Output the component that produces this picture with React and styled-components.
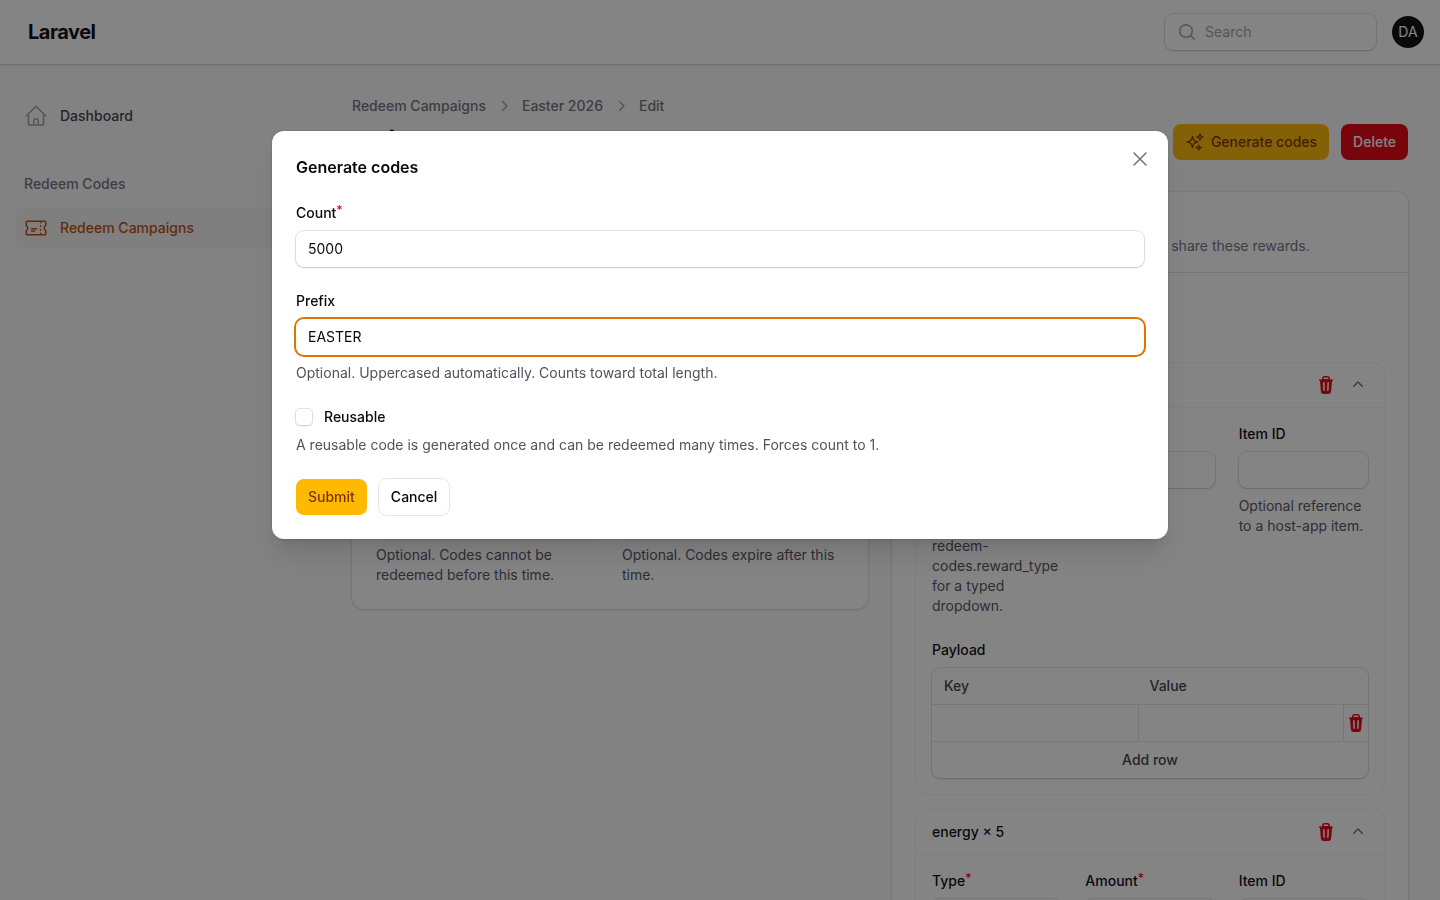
import React from 'react';
import styled, { createGlobalStyle, css } from 'styled-components';
import {
  HiOutlineHome,
  HiOutlineTicket,
  HiOutlineSparkles,
  HiOutlineXMark,
  HiMiniMagnifyingGlass,
  HiMiniChevronRight,
  HiMiniChevronUp,
  HiMiniTrash,
} from 'react-icons/hi2';

const GlobalStyle = createGlobalStyle`
  *, *::before, *::after {
    box-sizing: border-box;
  }

  body {
    margin: 0;
    overflow: hidden;
    background: #fafafa;
    color: #09090b;
    font-family: Inter, "Liberation Sans", sans-serif;
    font-size: 14px;
    line-height: 20px;
    -webkit-font-smoothing: antialiased;
  }

  button, input {
    font: inherit;
    color: inherit;
  }

  h1, h2, h3, p {
    margin: 0;
  }
`;

const ring = '0 0 0 1px rgba(9, 9, 11, 0.1)';
const softRing = '0 0 0 1px rgba(9, 9, 11, 0.05)';
const shadow = '0 1px 3px rgba(0, 0, 0, 0.1), 0 1px 2px -1px rgba(0, 0, 0, 0.1)';

const Shell = styled.div`
  height: 100vh;
  overflow: hidden;
`;

const Topbar = styled.header`
  display: flex;
  align-items: center;
  justify-content: space-between;
  height: 64px;
  padding: 0 16px 0 28px;
  background: #fff;
  box-shadow: ${softRing}, ${shadow};
`;

const Logo = styled.a`
  font-size: 20px;
  font-weight: 700;
  letter-spacing: -0.025em;
  color: #09090b;
  text-decoration: none;
`;

const TopbarEnd = styled.div`
  display: flex;
  align-items: center;
  gap: 16px;
`;

const SearchBox = styled.label`
  display: flex;
  align-items: center;
  gap: 8px;
  width: 211px;
  height: 36px;
  padding: 0 12px;
  border-radius: 8px;
  background: #fff;
  box-shadow: ${ring}, ${shadow};
  color: #9f9fa9;
`;

const SearchInput = styled.input`
  flex: 1;
  min-width: 0;
  padding: 0;
  border: none;
  outline: none;
  background: none;

  &::placeholder {
    color: #9f9fa9;
    opacity: 1;
  }
`;

const Avatar = styled.button`
  width: 32px;
  height: 32px;
  padding: 0;
  border: none;
  border-radius: 50%;
  background: #09090b;
  color: #fff;
`;

const Layout = styled.div`
  display: flex;
`;

const Sidebar = styled.nav`
  display: flex;
  flex-direction: column;
  gap: 28px;
  flex: 0 0 320px;
  padding: 32px 16px;
`;

const NavGroup = styled.div`
  display: flex;
  flex-direction: column;
  gap: 4px;
`;

const NavLabel = styled.span`
  padding: 8px;
  font-weight: 500;
  line-height: 24px;
  color: #71717b;
`;

const NavItem = styled.a`
  display: flex;
  align-items: center;
  gap: 12px;
  height: 40px;
  padding: 0 8px;
  border-radius: 8px;
  background: ${props => props.$active ? '#f4f4f5' : 'transparent'};
  color: ${props => props.$active ? '#bb4d00' : '#3f3f46'};
  font-weight: 500;
  text-decoration: none;

  svg {
    color: ${props => props.$active ? '#bb4d00' : '#9f9fa9'};
  }
`;

const Main = styled.main`
  flex: 1;
  min-width: 0;
  padding: 32px;
`;

const PageHeader = styled.div`
  display: flex;
  align-items: flex-start;
  justify-content: space-between;
  margin-bottom: 32px;
`;

const Breadcrumbs = styled.div`
  display: flex;
  align-items: center;
  gap: 8px;
  margin-bottom: 8px;
  color: #9f9fa9;
`;

const Crumb = styled.a`
  color: #71717b;
  font-weight: 500;
  text-decoration: none;
`;

const Title = styled.h1`
  font-size: 30px;
  font-weight: 700;
  line-height: 36px;
  letter-spacing: -0.025em;
`;

const Actions = styled.div`
  display: flex;
  gap: 12px;
  margin-top: ${props => props.$offset ? '28px' : '0'};
`;

const buttonColors = {
  primary: css`
    background: #ffb900;
    color: #7b3306;
  `,
  danger: css`
    background: #e7000b;
    color: #fff;
  `,
  gray: css`
    background: #fff;
    color: #09090b;
    box-shadow: ${ring};
  `,
};

const Button = styled.button`
  display: inline-flex;
  align-items: center;
  gap: 6px;
  height: 36px;
  padding: 0 12px;
  border: none;
  border-radius: 8px;
  font-weight: 500;
  cursor: pointer;
  ${props => buttonColors[props.$color]}
`;

const IconButton = styled.button`
  display: inline-flex;
  padding: 0;
  border: none;
  background: none;
  color: ${props => props.$danger ? '#e7000b' : '#71717b'};
  cursor: pointer;
`;

const Columns = styled.div`
  display: grid;
  grid-template-columns: repeat(${props => props.$count}, minmax(0, 1fr));
  align-items: start;
  gap: 24px;
`;

const Section = styled.section`
  border-radius: 12px;
  background: #fff;
  box-shadow: ${softRing}, ${shadow};
`;

const SectionHeader = styled.div`
  display: flex;
  flex-direction: column;
  gap: 4px;
  padding: 16px 24px;
  border-bottom: 1px solid #e4e4e7;
`;

const SectionHeading = styled.h2`
  font-size: 16px;
  font-weight: 600;
  line-height: 24px;
`;

const SectionText = styled.p`
  color: #71717b;
  white-space: nowrap;
`;

const SectionBody = styled.div`
  display: flex;
  flex-direction: column;
  gap: 24px;
  padding: 24px;
`;

const Field = styled.div`
  display: flex;
  flex-direction: column;
  gap: 8px;
`;

const Label = styled.label`
  font-weight: 500;
`;

const Required = styled.sup`
  position: relative;
  top: -4px;
  vertical-align: baseline;
  font-size: 12px;
  line-height: 0;
  color: #e7000b;
`;

const TextInput = styled.input`
  width: 100%;
  height: 36px;
  padding: 0 12px 2px;
  border: none;
  border-radius: 8px;
  outline: none;
  background: #fff;
  box-shadow: ${ring}, ${shadow};

  &:focus {
    box-shadow: 0 0 0 2px #e17100;
  }
`;

const HelpText = styled.p`
  color: #52525c;
`;

const Repeater = styled.div`
  display: flex;
  flex-direction: column;
  gap: 16px;
`;

const RepeaterTop = styled.div`
  display: flex;
  flex-direction: column;
  gap: 8px;
`;

const TextLink = styled.button`
  align-self: flex-start;
  padding: 0;
  border: none;
  background: none;
  font-weight: 500;
  line-height: 22px;
`;

const Item = styled.div`
  border-radius: 12px;
  background: #fff;
  box-shadow: ${softRing};
`;

const ItemHeader = styled.div`
  display: flex;
  align-items: center;
  gap: 12px;
  height: 44px;
  padding: 0 16px;
`;

const ItemTitle = styled.h3`
  flex: 1;
  font-size: 14px;
  font-weight: 500;
`;

const ItemBody = styled.div`
  display: flex;
  flex-direction: column;
  gap: 24px;
  padding: 16px;
  border-top: 1px solid #f4f4f5;
`;

const KeyValue = styled.div`
  border-radius: 8px;
  background: #fff;
  box-shadow: ${ring}, ${shadow};
`;

const Table = styled.table`
  width: 100%;
  table-layout: fixed;
  border-spacing: 0;

  th {
    height: 36px;
    padding: 0 12px;
    text-align: left;
    font-weight: 500;
    color: #3f3f46;
  }

  th:last-child {
    width: 25px;
    padding: 0;
  }

  td {
    height: 38px;
    padding: 0;
    border-top: 1px solid #e4e4e7;
    border-bottom: 1px solid #e4e4e7;
  }

  td + td {
    border-left: 1px solid #e4e4e7;
  }
`;

const CellInput = styled.input`
  display: block;
  width: 100%;
  height: 36px;
  padding: 0 12px;
  border: none;
  outline: none;
  background: none;
`;

const DeleteCell = styled.div`
  display: flex;
  justify-content: center;
`;

const AddRow = styled.button`
  display: block;
  width: 100%;
  height: 36px;
  padding: 0;
  border: none;
  background: none;
  color: #3f3f46;
  font-weight: 500;
`;

const Overlay = styled.div`
  position: fixed;
  inset: 0;
  display: grid;
  grid-template-rows: 1fr auto 3fr;
  justify-items: center;
  padding: 16px;
  background: rgba(9, 9, 11, 0.5);
`;

const Modal = styled.form`
  position: relative;
  grid-row: 2;
  display: flex;
  flex-direction: column;
  gap: 24px;
  width: 100%;
  max-width: 896px;
  padding: 24px;
  border-radius: 12px;
  background: #fff;
  box-shadow: ${softRing}, 0 20px 25px -5px rgba(0, 0, 0, 0.1), 0 8px 10px -6px rgba(0, 0, 0, 0.1);
`;

const CloseButton = styled(IconButton)`
  position: absolute;
  top: 16px;
  right: 16px;
`;

const CheckLabel = styled(Label)`
  display: flex;
  align-items: center;
  gap: 12px;
`;

const Checkbox = styled.input`
  appearance: none;
  width: 16px;
  height: 16px;
  margin: 0;
  border-radius: 4px;
  background: #fff;
  box-shadow: ${ring}, ${shadow};

  &:checked {
    background: #e17100;
  }
`;

function FormField({ id, label, required, help, ...rest }) {
  return (
    <Field>
      <Label htmlFor={id}>{label}{required && <Required>*</Required>}</Label>
      <TextInput id={id} type="text" {...rest} />
      {help && <HelpText>{help}</HelpText>}
    </Field>
  );
}

function RewardItem({ id, title, type, amount }) {
  return (
    <Item>
      <ItemHeader>
        <ItemTitle>{title}</ItemTitle>
        <IconButton type="button" $danger aria-label="Delete"><HiMiniTrash size={20} /></IconButton>
        <IconButton type="button" aria-label="Collapse"><HiMiniChevronUp size={20} /></IconButton>
      </ItemHeader>
      <ItemBody>
        <Columns $count={3}>
          <FormField
            id={`${id}-type`}
            label="Type"
            required
            defaultValue={type}
            help="Free-form string. Set config value redeem-codes.reward_type for a typed dropdown."
          />
          <FormField id={`${id}-amount`} label="Amount" required defaultValue={amount} />
          <FormField id={`${id}-item`} label="Item ID" help="Optional reference to a host-app item." />
        </Columns>
        <Field>
          <Label as="span">Payload</Label>
          <KeyValue>
            <Table>
              <thead>
                <tr>
                  <th>Key</th>
                  <th>Value</th>
                  <th aria-label="Actions" />
                </tr>
              </thead>
              <tbody>
                <tr>
                  <td><CellInput aria-label="Key" /></td>
                  <td><CellInput aria-label="Value" /></td>
                  <td>
                    <DeleteCell>
                      <IconButton type="button" $danger aria-label="Delete row"><HiMiniTrash size={20} /></IconButton>
                    </DeleteCell>
                  </td>
                </tr>
              </tbody>
            </Table>
            <AddRow type="button">Add row</AddRow>
          </KeyValue>
        </Field>
      </ItemBody>
    </Item>
  );
}

function GenerateCodesModal({ onClose }) {
  const [count, setCount] = React.useState('5000');
  const [prefix, setPrefix] = React.useState('EASTER');

  return (
    <Overlay>
      <Modal role="dialog" aria-labelledby="modal-heading" onSubmit={(e) => e.preventDefault()}>
        <CloseButton type="button" aria-label="Close" onClick={onClose}>
          <HiOutlineXMark size={24} />
        </CloseButton>
        <SectionHeading id="modal-heading">Generate codes</SectionHeading>
        <FormField id="count" label="Count" required value={count} onChange={(e) => setCount(e.target.value)} />
        <FormField
          id="prefix"
          label="Prefix"
          value={prefix}
          autoFocus
          onChange={(e) => setPrefix(e.target.value)}
          help="Optional. Uppercased automatically. Counts toward total length."
        />
        <Field>
          <CheckLabel>
            <Checkbox type="checkbox" />
            Reusable
          </CheckLabel>
          <HelpText>A reusable code is generated once and can be redeemed many times. Forces count to 1.</HelpText>
        </Field>
        <Actions>
          <Button type="submit" $color="primary">Submit</Button>
          <Button type="button" $color="gray" onClick={onClose}>Cancel</Button>
        </Actions>
      </Modal>
    </Overlay>
  );
}

export default function App() {
  const [open, setOpen] = React.useState(true);

  return (
    <>
      <GlobalStyle />
      <Shell>
        <Topbar>
          <Logo href="#">Laravel</Logo>
          <TopbarEnd>
            <SearchBox>
              <HiMiniMagnifyingGlass size={20} />
              <SearchInput type="search" placeholder="Search" aria-label="Search" />
            </SearchBox>
            <Avatar type="button">DA</Avatar>
          </TopbarEnd>
        </Topbar>
        <Layout>
          <Sidebar>
            <NavItem href="#"><HiOutlineHome size={24} />Dashboard</NavItem>
            <NavGroup>
              <NavLabel>Redeem Codes</NavLabel>
              <NavItem href="#" $active><HiOutlineTicket size={24} />Redeem Campaigns</NavItem>
            </NavGroup>
          </Sidebar>
          <Main>
            <PageHeader>
              <div>
                <Breadcrumbs>
                  <Crumb href="#">Redeem Campaigns</Crumb>
                  <HiMiniChevronRight size={20} />
                  <Crumb href="#">Easter 2026</Crumb>
                  <HiMiniChevronRight size={20} />
                  <Crumb href="#">Edit</Crumb>
                </Breadcrumbs>
                <Title>Edit Easter 2026</Title>
              </div>
              <Actions $offset>
                <Button type="button" $color="primary" onClick={() => setOpen(true)}>
                  <HiOutlineSparkles size={20} />
                  Generate codes
                </Button>
                <Button type="button" $color="danger">Delete</Button>
              </Actions>
            </PageHeader>
            <Columns $count={2}>
              <Section>
                <SectionHeader>
                  <SectionHeading>Campaign</SectionHeading>
                  <SectionText>Name and availability.</SectionText>
                </SectionHeader>
                <SectionBody>
                  <FormField id="name" label="Name" required defaultValue="Easter 2026" />
                  <FormField id="slug" label="Slug" defaultValue="easter-2026" />
                  <Columns $count={2}>
                    <FormField id="starts" label="Starts at" help="Optional. Codes cannot be redeemed before this time." />
                    <FormField id="ends" label="Ends at" help="Optional. Codes expire after this time." />
                  </Columns>
                </SectionBody>
              </Section>
              <Section>
                <SectionHeader>
                  <SectionHeading>Rewards</SectionHeading>
                  <SectionText>All codes generated for this campaign share these rewards.</SectionText>
                </SectionHeader>
                <SectionBody>
                  <Repeater>
                    <RepeaterTop>
                      <Label as="span">Rewards</Label>
                      <TextLink type="button">Collapse all</TextLink>
                    </RepeaterTop>
                    <RewardItem id="reward-1" title="gold × 100" type="gold" amount="100" />
                    <RewardItem id="reward-2" title="energy × 5" type="energy" amount="5" />
                  </Repeater>
                </SectionBody>
              </Section>
            </Columns>
          </Main>
        </Layout>
      </Shell>
      {open && <GenerateCodesModal onClose={() => setOpen(false)} />}
    </>
  );
}
